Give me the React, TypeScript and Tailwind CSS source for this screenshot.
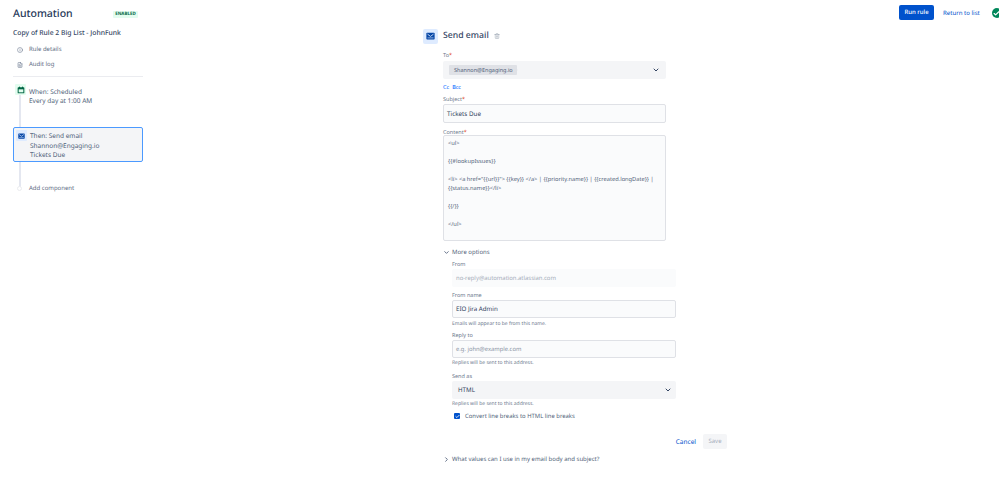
import { ChevronDown, ChevronRight, Check, Info, FileText, Trash2, X } from "lucide-react";
import type { ReactNode } from "react";

const CalendarIcon = () => (
  <svg viewBox="0 0 12 12" className="w-[8px] h-[8px]">
    <rect x="1" y="2" width="10" height="9" rx="1" fill="#006644" />
    <rect x="2.5" y="5" width="7" height="4.5" fill="#e3fcef" />
    <rect x="3" y="1" width="1.5" height="2" fill="#006644" />
    <rect x="7.5" y="1" width="1.5" height="2" fill="#006644" />
  </svg>
);

const MailIcon = ({ size }: { size: string }) => (
  <svg viewBox="0 0 12 10" className={size}>
    <rect x="0.5" y="0.5" width="11" height="9" rx="1" fill="#0747a6" />
    <path d="M2 2.5 L6 5.5 L10 2.5" stroke="#deebff" strokeWidth="1.1" fill="none" />
    <path d="M2 7.5 H10" stroke="#deebff" strokeWidth="0.8" fill="none" />
  </svg>
);

const Label = ({ children, required }: { children: ReactNode; required?: boolean }) => (
  <div className="text-[5.5px] leading-[8px] text-[#6b778c]">
    {children}
    {required && <span className="text-[#de350b]">*</span>}
  </div>
);

const Help = ({ children }: { children: ReactNode }) => (
  <div className="text-[5px] leading-[8px] text-[#6b778c]">{children}</div>
);

export default function App() {
  return (
    <div className="w-[999px] h-[486px] flex overflow-hidden bg-white font-['Noto_Sans',sans-serif] text-[#253858] [text-rendering:geometricPrecision]">
      <aside className="w-[143px] shrink-0 pl-[13px] pt-[6px]">
        <div className="flex items-center justify-between h-[16px] pr-[5px]">
          <h1 className="mt-[1px] text-[10.5px] font-medium text-[#253858]">Automation</h1>
          <span className="h-[7px] w-[25px] rounded-[1px] bg-[#e3fcef] text-[#006644] text-[4.5px] leading-[7px] font-bold text-center">
            ENABLED
          </span>
        </div>
        <div className="mt-[6px] text-[6.8px] leading-[10px] font-medium text-[#344563]">
          Copy of Rule 2 Big List - JohnFunk
        </div>
        <div className="mt-[7px] flex flex-col gap-[6px] text-[6px] leading-[9px] text-[#5e6c84]">
          <div className="flex items-center pl-[4px] gap-[6px]">
            <Info className="w-[6px] h-[6px]" />
            <span>Rule details</span>
          </div>
          <div className="flex items-center pl-[4px] gap-[6px]">
            <FileText className="w-[6px] h-[6px]" />
            <span>Audit log</span>
          </div>
        </div>
        <div className="mt-[7px] h-px bg-[#ebecf0]" />
        <div className="relative mt-[7px]">
          <div className="absolute left-[6px] top-0 w-[2px] h-[103px] bg-[#e4e7f0]" />
          <div className="relative flex pl-[2px] gap-[3px] h-[43px]">
            <div className="w-[11px] h-[11px] rounded-[1px] bg-[#e3fcef] flex items-center justify-center">
              <CalendarIcon />
            </div>
            <div className="text-[6.5px] leading-[9px] text-[#505f79] pt-[3px]">
              <div>When: Scheduled</div>
              <div>Every day at 1:00 AM</div>
            </div>
          </div>
          <div className="relative h-[35px] rounded-[2px] border border-[#4c9aff] bg-[#f4f5f7] pl-[2px] pt-[2px] flex gap-[3px]">
            <div className="w-[11px] h-[11px] rounded-[1px] bg-[#deebff] flex items-center justify-center shrink-0">
              <MailIcon size="w-[7px] h-[6px]" />
            </div>
            <div className="text-[6.5px] leading-[9px] text-[#505f79] pt-[1px]">
              <div>Then: Send email</div>
              <div className="mt-[1px]">Shannon@Engaging.io</div>
              <div>Tickets Due</div>
            </div>
          </div>
          <div className="relative mt-[22px] flex items-center h-[9px] pl-[4px] gap-[7px]">
            <div className="w-[5px] h-[5px] rounded-full bg-white border border-[#ebecf0]" />
            <span className="text-[6px] text-[#5e6c84]">Add component</span>
          </div>
        </div>
      </aside>

      <main className="w-[756px] shrink-0 pl-[280px] pt-[29px]">
        <div className="flex items-center h-[14px]">
          <div className="w-[15px] h-[15px] rounded-[2px] bg-[#deebff] flex items-center justify-center">
            <MailIcon size="w-[9px] h-[8px]" />
          </div>
          <span className="ml-[5px] text-[8.7px] font-medium text-[#344563]">Send email</span>
          <Trash2 className="ml-[5px] w-[6px] h-[6px] text-[#97a0af]" />
        </div>

        <div className="ml-[20px] w-[223px] mt-[8px]">
          <Label required>To</Label>
          <div className="mt-[2px] h-[18px] rounded-[2px] bg-[#f4f5f7] flex items-center justify-between pl-[6px] pr-[6px]">
            <div className="h-[10px] w-[68px] rounded-[1px] bg-[#dfe1e6] flex items-center pl-[5px] gap-[4px] text-[5.5px] text-[#505f79]">
              <span>Shannon@Engaging.io</span>
              <X className="w-[4px] h-[4px]" strokeWidth={5} />
            </div>
            <ChevronDown className="w-[8px] h-[8px] text-[#344563]" strokeWidth={3} />
          </div>
          <div className="mt-[4px] h-[8px] flex gap-[3px] text-[5.5px] leading-[8px] text-[#0065ff]">
            <span>Cc</span>
            <span>Bcc</span>
          </div>
          <div className="mt-[4px]">
            <Label required>Subject</Label>
          </div>
          <div className="mt-[1px] h-[19px] rounded-[2px] border border-[#dfe1e6] bg-[#fafbfc] flex items-center pl-[3px] text-[6.3px] text-[#344563]">
            Tickets Due
          </div>
          <div className="mt-[5px]">
            <Label required>Content</Label>
          </div>
          <div className="-mt-[1px] h-[106px] rounded-[2px] border border-[#dfe1e6] bg-[#fafbfc] px-[4px] pt-[3px] text-[5.7px] leading-[9px] text-[#505f79]">
            <div>&lt;ul&gt;</div>
            <div className="mt-[9px]">{"{{#lookupIssues}}"}</div>
            <div className="mt-[9px]">
              {'<li> <a href="{{url}}"> {{key}} </a> | {{priority.name}} |  {{created.longDate}} | {{status.name}}</li>'}
            </div>
            <div className="mt-[9px]">{"{{/}}"}</div>
            <div className="mt-[9px]">&lt;/ul&gt;</div>
          </div>
        </div>

        <div className="ml-[20px] mt-[7px] flex items-center h-[8px] gap-[2px] text-[6px] text-[#505f79]">
          <ChevronDown className="w-[7px] h-[7px]" strokeWidth={3} />
          <span>More options</span>
        </div>

        <div className="ml-[29px] w-[224px] mt-[4px]">
          <Label>From</Label>
          <div className="mt-[1px] h-[18px] rounded-[2px] bg-[#fafbfc] flex items-center pl-[4px] text-[5.9px] text-[#a5adba]">
            no-reply@automation.atlassian.com
          </div>
          <div className="mt-[4px]">
            <Label>From name</Label>
          </div>
          <div className="mt-[1px] h-[18px] rounded-[2px] border border-[#dfe1e6] bg-[#fafbfc] flex items-center pl-[3px] text-[6.2px] text-[#344563]">
            EIO Jira Admin
          </div>
          <div className="mt-[2px]">
            <Help>Emails will appear to be from this name.</Help>
          </div>
          <div className="mt-[3px]">
            <Label>Reply to</Label>
          </div>
          <div className="mt-[1px] h-[18px] rounded-[2px] border border-[#dfe1e6] bg-[#fafbfc] flex items-center pl-[3px] text-[5.8px] text-[#8993a4]">
            e.g. john@example.com
          </div>
          <div className="mt-[1px]">
            <Help>Replies will be sent to this address.</Help>
          </div>
          <div className="mt-[5px]">
            <Label>Send as</Label>
          </div>
          <div className="mt-[1px] h-[18px] rounded-[2px] bg-[#f4f5f7] flex items-center justify-between pl-[6px] pr-[4px] text-[6.2px] text-[#344563]">
            <span>HTML</span>
            <ChevronDown className="w-[8px] h-[8px] text-[#344563]" strokeWidth={3} />
          </div>
          <div className="mt-[1px]">
            <Help>Replies will be sent to this address.</Help>
          </div>
          <div className="mt-[4px] h-[8px] flex items-center pl-[2px] gap-[5px] text-[5.9px] text-[#505f79]">
            <div className="w-[6px] h-[6px] rounded-[1px] bg-[#0052cc] flex items-center justify-center">
              <Check className="w-[5px] h-[5px] text-white" strokeWidth={4} />
            </div>
            <span>Convert line breaks to HTML line breaks</span>
          </div>
          <div className="mt-[14px] -mr-[51px] flex justify-end items-center gap-[7px]">
            <span className="text-[6.5px] text-[#0052cc]">Cancel</span>
            <div className="h-[15px] w-[24px] rounded-[2px] bg-[#f4f5f7] flex items-center justify-center text-[6px] text-[#a5adba]">
              Save
            </div>
          </div>
        </div>

        <div className="ml-[20px] mt-[6px] flex items-center h-[8px] gap-[2px] text-[6px] text-[#505f79]">
          <ChevronRight className="w-[7px] h-[7px]" strokeWidth={3} />
          <span>What values can I use in my email body and subject?</span>
        </div>
      </main>

      <div className="w-[100px] shrink-0 pt-[5px] flex items-start">
        <div className="w-[35px] h-[15px] rounded-[2px] bg-[#0052cc] text-white text-[6px] font-medium flex items-center justify-center shrink-0">
          Run rule
        </div>
        <span className="ml-[9px] mt-[3px] text-[6.1px] leading-[9px] text-[#0052cc] whitespace-nowrap shrink-0">
          Return to list
        </span>
        <div className="ml-[12px] mt-[3px] w-[10px] h-[10px] rounded-full bg-[#00875a] flex items-center justify-center shrink-0">
          <Check className="w-[7px] h-[7px] text-white" strokeWidth={4} />
        </div>
      </div>
    </div>
  );
}
